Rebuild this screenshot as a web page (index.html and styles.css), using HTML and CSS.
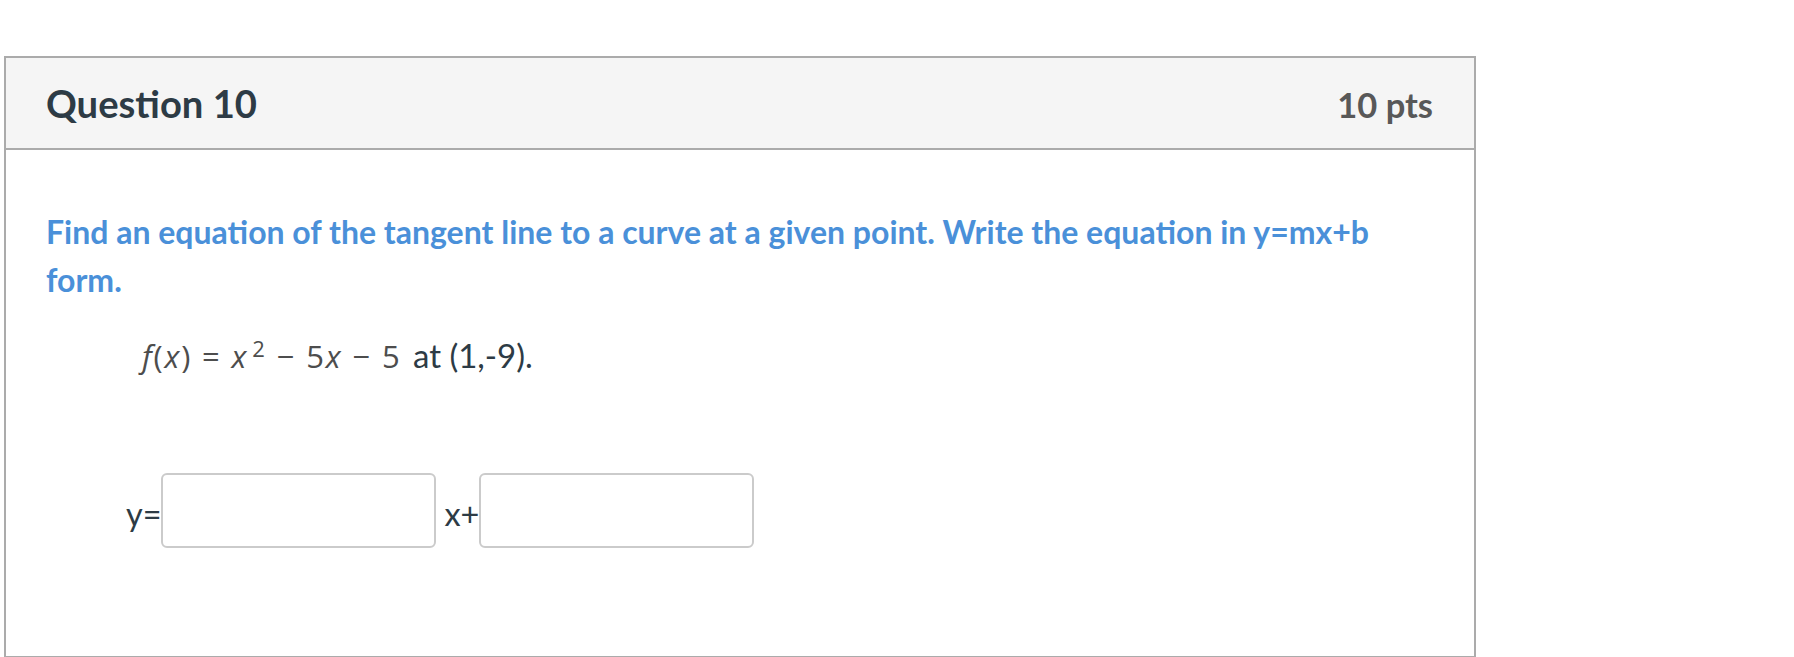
FILE: index.html
```html
<!DOCTYPE html>
<html lang="en">
<head>
<meta charset="utf-8">
<title>Question 10</title>
<link rel="stylesheet" href="styles.css">
</head>
<body>
<div class="page">
  <div class="question">
    <div class="q-header">
      <h2 class="q-title">Question 10</h2>
      <span class="q-points">10 pts</span>
    </div>
    <div class="q-body">
      <p class="q-text">Find an equation of the tangent line to a curve at a given point. Write the equation in y=mx+b form.</p>
      <p class="q-math"><span class="eq"><span class="it">f</span>(<span class="it">x</span>)<span class="op">=</span><span class="it">x</span><sup>2</sup><span class="op">−</span>5<span class="it">x</span><span class="op">−</span>5</span> at (1,-9).</p>
      <div class="answer-row">
        <span class="lbl">y=</span>
        <input class="ans" type="text" aria-label="slope">
        <span class="lbl lbl-x">x+</span>
        <input class="ans" type="text" aria-label="intercept">
      </div>
    </div>
  </div>
</div>
</body>
</html>
```

FILE: styles.css
```css
html, body {
  margin: 0;
  padding: 0;
  background: #ffffff;
}

body {
  font-family: Lato, "Liberation Sans", sans-serif;
  color: #2d3b45;
}

.page {
  padding: 56px 0 0 4px;
}

.question {
  width: 1472px;
  box-sizing: border-box;
  border: 2px solid #ababab;
}

.q-header {
  height: 90px;
  background: #f5f5f5;
  border-bottom: 2px solid #ababab;
  display: flex;
  align-items: center;
  justify-content: space-between;
  padding: 0 41px 0 40px;
}

.q-title {
  margin: 2px 0 0 0;
  font-size: 38.2px;
  font-weight: 700;
  line-height: 1.2;
  color: #2d3b45;
}

.q-points {
  font-size: 34.5px;
  font-weight: 700;
  line-height: 1.2;
  color: #585858;
  margin-top: 3px;
}

.q-body {
  padding: 58px 40px 108px 40px;
}

.q-text {
  margin: 0;
  font-size: 32px;
  line-height: 48px;
  font-weight: 700;
  color: #4a90d9;
}

.q-math {
  margin: 27px 0 0 0;
  padding-left: 96px;
  font-size: 33px;
  line-height: 48px;
  color: #2d3b45;
}

.eq {
  font-family: "Open Sans", "DejaVu Sans", sans-serif;
  font-size: 31px;
  letter-spacing: 1.8px;
  color: #4d4d4d;
  margin-right: 3px;
}

.eq .it {
  font-style: italic;
}

.eq .op {
  padding: 0 10px;
}

.eq sup {
  font-size: 22px;
  vertical-align: 11px;
  line-height: 0;
  margin-left: 4px;
}

.answer-row {
  margin-top: 93px;
  padding-left: 80px;
  display: flex;
  align-items: center;
  height: 75px;
}

.lbl {
  font-size: 32.4px;
  line-height: 1.2;
  padding-top: 7px;
  color: #2d3b45;
}

.lbl-x {
  margin-left: 8px;
}

.ans {
  width: 275px;
  height: 75px;
  box-sizing: border-box;
  border: 2px solid #cbcbcb;
  border-radius: 6px;
  background: #ffffff;
  margin: 0;
  padding: 0 10px;
  font: inherit;
}
```
